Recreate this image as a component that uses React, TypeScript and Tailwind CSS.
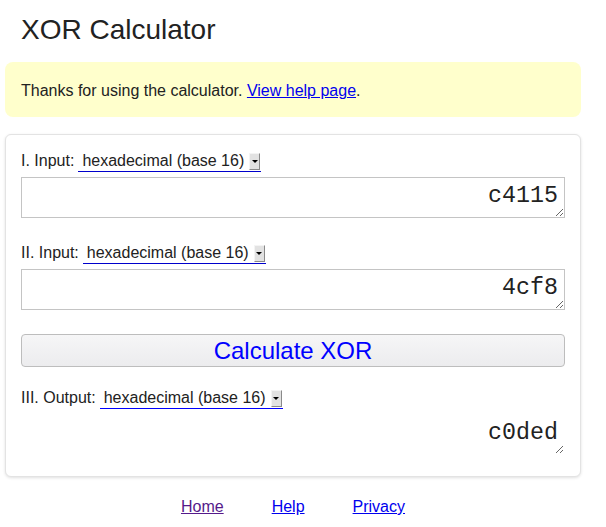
import React from 'react';

function FakeSelect({ line }: { line: string }) {
  return (
    <span className={`ml-[4px] inline-flex h-[21px] items-start border-b pl-[4px] pr-[1px] ${line}`}>
      <span className="leading-[20px] text-[#222]">hexadecimal (base 16)</span>
      <span className="ml-[5px] mt-[2px] flex h-[17px] w-[11px] items-center justify-center border border-t-[#f4f4f4] border-l-[#f4f4f4] border-r-[#8a8a8a] border-b-[#8a8a8a] bg-[#e2e2e2]">
        <span className="h-0 w-0 border-x-[3px] border-t-[3px] border-x-transparent border-t-black" />
      </span>
    </span>
  );
}

function Field({ value, bordered = true }: { value: string; bordered?: boolean }) {
  return (
    <textarea
      readOnly
      value={value}
      className={`mt-[5px] box-border block h-[41px] w-full border pl-[6px] pr-[6px] pt-[4px] text-right font-['Liberation_Mono',monospace] text-[23.3px] leading-[28px] text-[#222] outline-none ${
        bordered ? 'border-[#c4c4c4]' : 'border-transparent'
      }`}
    />
  );
}

export default function App() {
  return (
    <div className="min-h-screen bg-white font-['Liberation_Sans',Arial,sans-serif] text-[#222]">
      <div className="ml-[5px] w-[576px]">
        {/* Title */}
        <h1 className="pl-[16px] pt-[14px] text-[28px] leading-[31px] font-normal text-[#222]">
          XOR Calculator
        </h1>

        {/* Notice */}
        <div className="mt-[17px] rounded-[8px] bg-[#ffffcc] px-[16px] pb-[17px] pt-[19px] text-[16px] leading-[19px]">
          Thanks for using the calculator.{' '}
          <a href="#" className="text-[#0000ee] underline">
            View help page
          </a>
          .
        </div>

        {/* Calculator card */}
        <div className="mt-[17px] rounded-[6px] border border-[#e3e3e3] bg-white px-[15px] pb-[21px] pt-[16px] text-[16px] shadow-[0_1px_3px_rgba(0,0,0,0.12)]">
          <div className="flex h-[21px] items-start">
            <span className="leading-[20px]">I. Input:</span>
            <FakeSelect line="border-b-[#0000cc]" />
          </div>
          <Field value="c4115" />

          <div className="mt-[25px] flex h-[21px] items-start">
            <span className="leading-[20px]">II. Input:</span>
            <FakeSelect line="border-b-[#0000cc]" />
          </div>
          <Field value="4cf8" />

          <button className="mt-[24px] box-border flex h-[33px] w-full items-center justify-center rounded-[4px] border border-[#bdbdbd] bg-gradient-to-b from-[#f6f6f7] to-[#ececee] text-[24px] leading-[28px] text-[#0000ff]">
            Calculate XOR
          </button>

          <div className="mt-[21px] flex h-[21px] items-start">
            <span className="leading-[20px]">III. Output:</span>
            <FakeSelect line="border-b-[#0000ff]" />
          </div>
          <Field value="c0ded" bordered={false} />
        </div>

        {/* Footer */}
        <div className="mt-[21px] flex justify-center gap-[48px] text-[16px] leading-[18px]">
          <a href="#" className="text-[#551a8b] underline">
            Home
          </a>
          <a href="#" className="text-[#0000ee] underline">
            Help
          </a>
          <a href="#" className="text-[#0000ee] underline">
            Privacy
          </a>
        </div>
      </div>
    </div>
  );
}
